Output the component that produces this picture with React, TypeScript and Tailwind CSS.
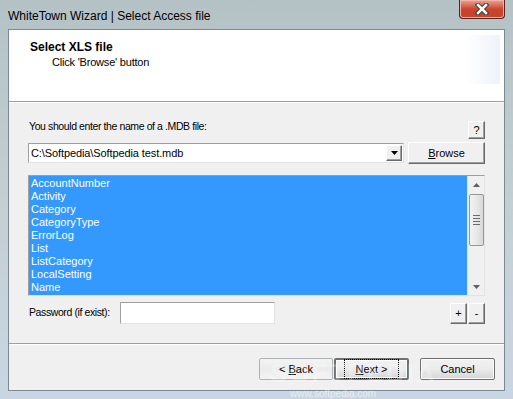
import React from 'react'

const tables = [
  'AccountNumber',
  'Activity',
  'Category',
  'CategoryType',
  'ErrorLog',
  'List',
  'ListCategory',
  'LocalSetting',
  'Name',
]

const font = { fontFamily: '"Liberation Sans", Arial, sans-serif' }

const WinButton = ({ children, className = '' }: { children: React.ReactNode; className?: string }) => (
  <div
    className={
      'flex items-center justify-center border border-[#707070] bg-gradient-to-b from-[#f2f2f2] via-[#ebebeb] to-[#d6d6d6] text-[11px] text-black rounded-[2px] shadow-[inset_0_0_0_1px_#fcfcfc] ' +
      className
    }
  >
    {children}
  </div>
)

const ClassicButton = ({ children, className = '' }: { children: React.ReactNode; className?: string }) => (
  <div
    className={
      'flex items-center justify-center bg-[#f0f0f0] text-[11px] text-black border border-t-white border-l-white border-r-[#696969] border-b-[#696969] shadow-[inset_-1px_-1px_0_#a0a0a0] ' +
      className
    }
  >
    {children}
  </div>
)

export default function App() {
  return (
    <div
      className="w-[513px] h-[399px] flex flex-col px-[8px] pb-[8px] bg-gradient-to-b from-[#b4c2c6] via-[#c3cfd2] to-[#c9d6e2] overflow-hidden relative"
      style={font}
    >
      {/* title bar */}
      <div className="h-[29px] flex justify-between">
        <div className="pt-[7px] text-[12px] text-black">WhiteTown Wizard | Select Access file</div>
        <div className="w-[46px] h-[19px] rounded-b-[4px] border border-[#5b2020] border-t-0 bg-gradient-to-b from-[#e8a493] via-[#c9452e] to-[#c5432b] flex items-center justify-center shadow-[inset_0_0_0_1px_#f1b6a8]">
          <svg width="14" height="12" viewBox="0 0 14 12">
            <path d="M3 2 L11 10 M11 2 L3 10" stroke="#3a3a3a" strokeWidth="4.5" strokeLinecap="square" />
            <path d="M3 2 L11 10 M11 2 L3 10" stroke="#ffffff" strokeWidth="2.5" strokeLinecap="square" />
          </svg>
        </div>
      </div>

      {/* client */}
      <div className="flex-1 flex flex-col bg-[#f0f0f0] border border-[#7a8a93]">
        {/* header */}
        <div className="h-[72px] bg-white border-b border-[#a0a0a0] flex justify-between shrink-0">
          <div className="pl-[21px] pt-[10px]">
            <div className="text-[12px] font-bold text-black leading-[14px]">Select XLS file</div>
            <div className="pl-[22px] text-[11px] tracking-[-0.2px] text-black leading-[14px] mt-[1px]">Click 'Browse' button</div>
          </div>
          <div className="w-[35px] h-[49px] mt-[5px] mr-[4px] bg-gradient-to-r from-white to-[#eef2fa]" />
        </div>
        <div className="h-px bg-white shrink-0" />

        {/* body */}
        <div className="flex-1 flex flex-col px-[19px] pt-[16px]">
          <div className="h-[20px] flex justify-between">
            <div className="pl-[1px] pt-[1px] text-[10.5px] tracking-[-0.4px] leading-[13px] text-black whitespace-nowrap">
              You should enter the name of a .MDB file:
            </div>
            <ClassicButton className="w-[17px] h-[18px] mt-[2px]">?</ClassicButton>
          </div>

          <div className="mt-[3px] h-[22px] flex items-center justify-between">
            <div className="w-[376px] h-[20px] bg-white border border-t-[#a0a0a0] border-l-[#a0a0a0] border-r-[#e3e3e3] border-b-[#e3e3e3] flex items-center">
              <div className="flex-1 pl-[2px] text-[11px] tracking-[-0.1px] text-black">C:\Softpedia\Softpedia test.mdb</div>
              <ClassicButton className="w-[16px] h-[16px] mr-[1px]">
                <svg width="7" height="4" viewBox="0 0 7 4">
                  <path d="M0 0 H7 L3.5 4 Z" fill="#000" />
                </svg>
              </ClassicButton>
            </div>
            <ClassicButton className="w-[77px] h-[22px]">
              <span>
                <span className="underline">B</span>rowse
              </span>
            </ClassicButton>
          </div>

          <div className="mt-[11px] h-[121px] flex bg-[#3399ff] border border-t-[#a0a0a0] border-l-[#a0a0a0] border-r-[#e3e3e3] border-b-[#e3e3e3]">
            <div className="flex-1 pt-[1px] pl-[2px]">
              {tables.map((t) => (
                <div key={t} className="h-[13px] leading-[13px] text-[11px] text-white">
                  {t}
                </div>
              ))}
            </div>
            <div className="w-[17px] bg-[#f0f0f0] border-l border-[#e6e6e6] flex flex-col items-center">
              <div className="h-[17px] flex items-center justify-center">
                <svg width="7" height="4" viewBox="0 0 7 4">
                  <path d="M3.5 0 L7 4 H0 Z" fill="#606060" />
                </svg>
              </div>
              <div className="mt-[1px] w-[15px] h-[52px] rounded-[2px] border border-[#979797] bg-gradient-to-r from-[#f3f3f3] via-[#e8e8e8] to-[#d8d8d8] flex flex-col items-center justify-center gap-[2px]">
                <div className="w-[7px] h-px bg-[#6a6a6a]" />
                <div className="w-[7px] h-px bg-[#6a6a6a]" />
                <div className="w-[7px] h-px bg-[#6a6a6a]" />
                <div className="w-[7px] h-px bg-[#6a6a6a]" />
              </div>
              <div className="flex-1" />
              <div className="h-[17px] flex items-center justify-center">
                <svg width="7" height="4" viewBox="0 0 7 4">
                  <path d="M0 0 H7 L3.5 4 Z" fill="#606060" />
                </svg>
              </div>
            </div>
          </div>

          <div className="mt-[6px] h-[22px] flex items-center justify-between">
            <div className="flex items-center">
              <div className="pl-[1px] text-[10.5px] tracking-[-0.4px] text-black w-[92px] whitespace-nowrap">Password (if exist):</div>
              <div className="w-[155px] h-[22px] bg-white border border-t-[#a0a0a0] border-l-[#a0a0a0] border-r-[#e3e3e3] border-b-[#e3e3e3]" />
            </div>
            <div className="flex gap-[1px] h-[21px]">
              <ClassicButton className="w-[17px] h-[21px]">+</ClassicButton>
              <ClassicButton className="w-[17px] h-[21px]">-</ClassicButton>
            </div>
          </div>
        </div>

        {/* separator */}
        <div className="h-px bg-[#a0a0a0] shrink-0" />
        <div className="h-px bg-white shrink-0" />

        {/* footer */}
        <div className="h-[45px] flex justify-end pt-[13px] pr-[9px] shrink-0">
          <WinButton className="w-[74px] h-[22px] text-[#6d6d6d] border-[#adb2b5] from-[#f4f4f4] to-[#f4f4f4] shadow-none">
            <span>
              &lt; <span className="underline">B</span>ack
            </span>
          </WinButton>
          <WinButton className="ml-[1px] w-[75px] h-[22px] border-[#3c3c3c] border-[2px]">
            <span className="outline-1 outline-dotted outline-black px-[10px] py-[1px] -mx-[1px]">
              <span className="underline">N</span>ext &gt;
            </span>
          </WinButton>
          <WinButton className="ml-[11px] w-[75px] h-[22px]">Cancel</WinButton>
        </div>
      </div>

      {/* watermark */}
      <div className="absolute left-[270px] top-[354px] text-[26px] font-bold tracking-[2px] text-white/25 pointer-events-none">
        SOFTPEDIA
      </div>
      <div className="absolute left-[290px] top-[388px] text-[10px] leading-[11px] text-white/60 pointer-events-none">
        www.softpedia.com
      </div>
    </div>
  )
}
